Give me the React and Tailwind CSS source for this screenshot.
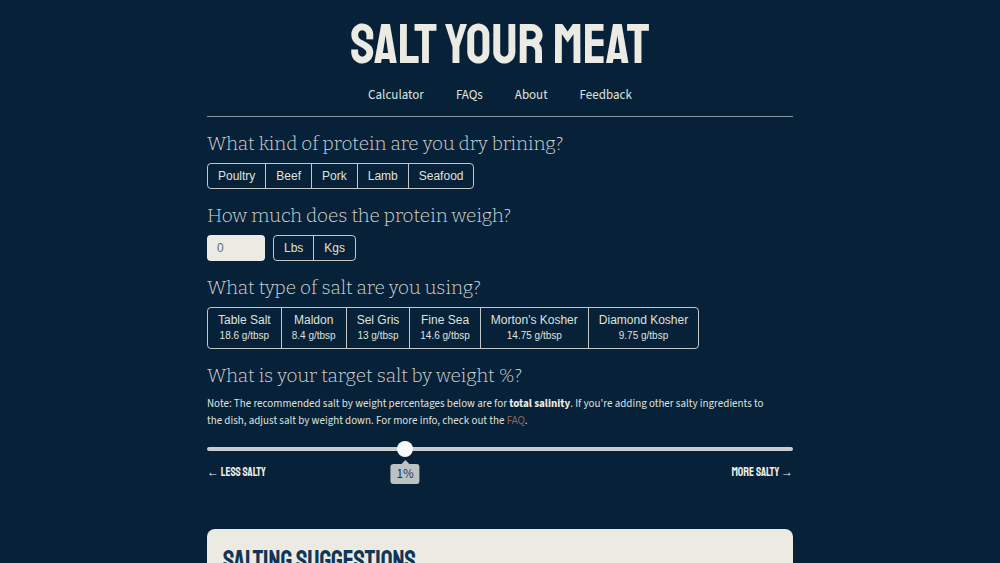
import React, { useState } from "react";

const proteins = ["Poultry", "Beef", "Pork", "Lamb", "Seafood"];
const units = ["Lbs", "Kgs"];
const salts = [
  { name: "Table Salt", density: "18.6 g/tbsp" },
  { name: "Maldon", density: "8.4 g/tbsp" },
  { name: "Sel Gris", density: "13 g/tbsp" },
  { name: "Fine Sea", density: "14.6 g/tbsp" },
  { name: "Morton's Kosher", density: "14.75 g/tbsp" },
  { name: "Diamond Kosher", density: "9.75 g/tbsp" },
];

const MIN = 0.5;
const MAX = 2;

const Question = ({ id, children }) => (
  <h2
    id={id}
    className="mb-[5px] font-['Roboto_Slab','RobotoSlab','Bitter','Zilla_Slab','DejaVu_Serif_Condensed','DejaVu_Serif',serif] text-[19px] leading-[28px] font-light text-[#d3d6d3]"
  >
    {children}
  </h2>
);

const ButtonGroup = ({ labelledBy, items, selected, onSelect }) => (
  <div
    role="group"
    aria-labelledby={labelledBy}
    className="flex w-fit divide-x divide-[#c3c8c7] rounded border border-[#c3c8c7]"
  >
    {items.map((item) => {
      const name = item.name || item;
      return (
        <button
          key={name}
          type="button"
          aria-pressed={selected === name}
          onClick={() => onSelect(name)}
          className="px-[10px] py-1 text-center text-[12px] leading-4 hover:bg-white/10 aria-pressed:bg-[#ebebe3] aria-pressed:text-[#072139]"
        >
          {name}
          {item.density && (
            <span className="block text-[10px]">{item.density}</span>
          )}
        </button>
      );
    })}
  </div>
);

const App = () => {
  const [protein, setProtein] = useState("");
  const [weight, setWeight] = useState("");
  const [unit, setUnit] = useState("");
  const [salt, setSalt] = useState("");
  const [percent, setPercent] = useState(1);

  const ratio = (percent - MIN) / (MAX - MIN);

  return (
    <div className="h-screen overflow-hidden bg-[#072139] font-['Liberation_Sans',Arial,sans-serif] text-[#dfe1dd]">
      <div className="mx-auto w-full max-w-[586px]">
        {/* Header */}
        <header className="mb-[13px] border-b border-[#8b979e] pt-[17px] pb-[11px] text-center">
          <h1 className="font-['Staatliches','Bebas_Neue','Roboto',sans-serif] text-[56px] leading-[56px] font-normal text-[#ebebe3]">
            SALT YOUR MEAT
          </h1>
          <nav className="mt-3 flex justify-center gap-8 font-['Source_Sans_Pro','Source_Sans_3','Noto_Sans_CJK_SC',sans-serif] text-[13px] leading-5">
            <a href="#calculator">Calculator</a>
            <a href="#faqs">FAQs</a>
            <a href="#about">About</a>
            <a href="#feedback">Feedback</a>
          </nav>
        </header>

        {/* Calculator */}
        <main>
          <section className="mb-[13px]">
            <Question id="protein">What kind of protein are you dry brining?</Question>
            <ButtonGroup
              labelledBy="protein"
              items={proteins}
              selected={protein}
              onSelect={setProtein}
            />
          </section>

          <section className="mb-[13px]">
            <Question id="weight">How much does the protein weigh?</Question>
            <div className="flex gap-2">
              <input
                type="text"
                inputMode="decimal"
                aria-labelledby="weight"
                placeholder="0"
                value={weight}
                onChange={(e) => setWeight(e.target.value)}
                className="w-[58px] rounded bg-[#ebebe3] px-[10px] text-[12px] text-[#072139] placeholder:text-[#5f6b70]"
              />
              <ButtonGroup
                labelledBy="weight"
                items={units}
                selected={unit}
                onSelect={setUnit}
              />
            </div>
          </section>

          <section className="mb-[13px]">
            <Question id="salt">What type of salt are you using?</Question>
            <ButtonGroup
              labelledBy="salt"
              items={salts}
              selected={salt}
              onSelect={setSalt}
            />
          </section>

          <section>
            <Question id="target">What is your target salt by weight %?</Question>
            <p className="pr-4 font-['Source_Sans_Pro','Source_Sans_3','Noto_Sans_CJK_SC',sans-serif] text-[11px] leading-[17px]">
              Note: The recommended salt by weight percentages below are for{" "}
              <strong className="text-[#ebebe3]">total salinity</strong>. If
              you're adding other salty ingredients to the dish, adjust salt by
              weight down. For more info, check out the{" "}
              <a href="#faqs" className="text-[#946657]">FAQ</a>.
            </p>

            <div className="relative mt-3">
              <input
                type="range"
                aria-labelledby="target"
                min={MIN}
                max={MAX}
                step={0.1}
                value={percent}
                onChange={(e) => setPercent(Number(e.target.value))}
                className="block h-4 w-full cursor-pointer appearance-none bg-transparent [&::-webkit-slider-runnable-track]:h-1 [&::-webkit-slider-runnable-track]:rounded-full [&::-webkit-slider-runnable-track]:bg-[#c9cdd2] [&::-webkit-slider-thumb]:-mt-[6px] [&::-webkit-slider-thumb]:size-4 [&::-webkit-slider-thumb]:appearance-none [&::-webkit-slider-thumb]:rounded-full [&::-webkit-slider-thumb]:bg-[#f9fafc]"
              />
              {/* Value bubble under the thumb */}
              <div className="pointer-events-none absolute inset-x-2 top-[19px]">
                <output
                  className="absolute flex -translate-x-1/2 flex-col items-center font-['Source_Sans_Pro','Source_Sans_3','Noto_Sans_CJK_SC',sans-serif] text-[13px] leading-5 text-[#0f3557]"
                  style={{ left: `${ratio * 100}%` }}
                >
                  <svg width="8" height="4" viewBox="0 0 8 4" aria-hidden="true">
                    <path d="M4 0L8 4H0Z" fill="#bdc2c2" />
                  </svg>
                  <span className="rounded-[3px] bg-[#bdc2c2] px-[6px]">{percent}%</span>
                </output>
              </div>
            </div>

            <div className="mt-[6px] flex justify-between font-['Staatliches','Bebas_Neue','Roboto',sans-serif] text-[12px] leading-5 font-normal text-[#ebebe3]">
              <span>← LESS SALTY</span>
              <span>MORE SALTY →</span>
            </div>
          </section>

          {/* Results */}
          <section className="mt-[46px] rounded-lg bg-[#ebebe3] px-4 pt-4 pb-8">
            <h2 className="font-['Staatliches','Bebas_Neue','Roboto',sans-serif] text-[26px] leading-8 font-normal text-[#0f3557]">
              SALTING SUGGESTIONS
            </h2>
          </section>
        </main>
      </div>
    </div>
  );
};

export default App;
